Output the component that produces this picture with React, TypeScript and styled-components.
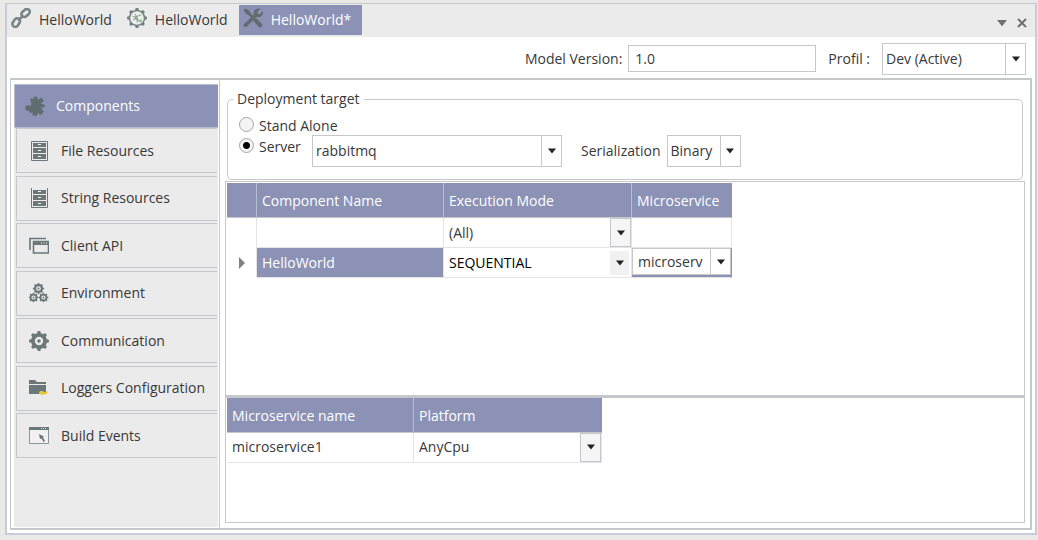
import React, { useState } from "react";
import styled, { createGlobalStyle, css } from "styled-components";

const accent = "#8b92b6";
const line = "#c6c7ca";
const panel = "#ebebeb";
const ink = "#383838";
const iconInk = "#6b7779";

const GlobalStyle = createGlobalStyle`
  * { box-sizing: border-box; }
  body {
    margin: 0;
    background: #e9e9e7;
    color: ${ink};
    font: 14px/20px "Open Sans", "Noto Sans", sans-serif;
  }
  button, input, select { font: inherit; color: inherit; }
  svg { flex: none; }
`;

const Page = styled.div`
  display: flex;
  min-height: 100vh;
  padding: 3px 1px 5px 5px;
`;

const Window = styled.div`
  flex: 1;
  display: flex;
  flex-direction: column;
  min-width: 0;
  border: 2px solid #c9cbda;
  border-top: 1px solid ${line};
  background: #fff;
`;

const TabStrip = styled.header`
  display: flex;
  align-items: flex-start;
  height: 33px;
  padding-top: 1px;
  background: ${panel};
`;

const Tab = styled.button<{ $active?: boolean }>`
  display: flex;
  align-items: center;
  gap: 8px;
  height: 30px;
  padding: 0 11px 0 4px;
  border: 0;
  background: ${(p) => (p.$active ? accent : "transparent")};
  color: ${(p) => (p.$active ? "#fff" : ink)};
  svg { margin-bottom: 4px; }
`;

const WindowActions = styled.div`
  display: flex;
  gap: 9px;
  margin: 12px 7px 0 auto;
`;

const IconButton = styled.button`
  display: flex;
  align-items: center;
  padding: 0;
  border: 0;
  background: none;
`;

const Toolbar = styled.div`
  display: flex;
  justify-content: flex-end;
  align-items: center;
  height: 41px;
  padding: 2px 9px 0 0;
`;

const ToolLabel = styled.label`
  margin-right: 6px;
`;

const VersionInput = styled.input`
  width: 188px;
  height: 27px;
  margin-right: 12px;
  padding: 0 6px;
  border: 1px solid ${line};
  background: #fff;
`;

const ProfileLabel = styled.label`
  margin-right: 12px;
`;

const ComboFrame = styled.div<{ $width: string }>`
  display: grid;
  grid-template-columns: 1fr 20px;
  flex: none;
  width: ${(p) => p.$width};
  height: 32px;
  border: 1px solid ${line};
  background: #fff;
`;

const ComboSelect = styled.select`
  grid-area: 1 / 1 / 2 / 3;
  min-width: 0;
  padding: 0 20px 0 3px;
  border: 0;
  appearance: none;
  background: transparent;
`;

const ComboArrow = styled.span<{ $shade?: "button" | "flat" }>`
  grid-area: 1 / 2;
  display: flex;
  align-items: center;
  justify-content: center;
  border-left: 1px solid ${line};
  pointer-events: none;
  ${(p) => p.$shade === "button" && css`
    border: 1px solid ${line};
    background: #f5f5f5;
  `}
  ${(p) => p.$shade === "flat" && css`
    margin: 3px 2px 2px 0;
    border: 0;
    background: #f1f1f1;
  `}
`;

const CellCombo = styled.div`
  display: grid;
  grid-template-columns: 1fr 21px;
  height: 29px;
`;

const CellSelect = styled(ComboSelect)`
  padding-left: 5px;
`;

const EditorCombo = styled(ComboFrame)`
  height: 27px;
  margin-bottom: 2px;
  select { padding-left: 5px; }
`;

const Body = styled.div`
  flex: 1;
  display: flex;
  margin: 0 3px 3px;
  border: 2px solid ${line};
  border-left-width: 1px;
`;

const Sidebar = styled.nav`
  flex: none;
  width: 209px;
  padding: 4px 0 1px 3px;
  border-right: 1px solid ${line};
`;

const SidebarFill = styled.div`
  height: 100%;
  margin-right: 1px;
  background: ${panel};
`;

const CurrentItem = styled.button`
  display: flex;
  align-items: center;
  gap: 11px;
  width: 100%;
  height: 44px;
  padding: 0 10px;
  border: 1px solid #b9bdd0;
  border-right: 0;
  background: ${accent};
  color: #fff;
  text-align: left;
`;

const ItemList = styled.div`
  display: flex;
  flex-direction: column;
  justify-content: space-between;
  height: 330px;
  padding: 0 1px 0 2px;
`;

const Item = styled.button`
  display: flex;
  align-items: center;
  gap: 12px;
  height: 45px;
  padding: 0 0 0 12px;
  border: solid ${line};
  border-width: 1px 0 1px 1px;
  background: transparent;
  text-align: left;
  white-space: nowrap;
`;

const Main = styled.main`
  flex: 1;
  display: flex;
  flex-direction: column;
  min-width: 0;
  padding: 9px 5px 5px;
`;

const Target = styled.fieldset`
  height: 91px;
  margin: 0 2px 1px;
  padding: 6px 11px 0;
  border: 1px solid ${line};
  border-radius: 5px;
`;

const Legend = styled.legend`
  margin-left: -6px;
  padding: 0 4px;
`;

const RadioLabel = styled.label`
  display: flex;
  align-items: center;
  gap: 5px;
  height: 22px;
`;

const Radio = styled.input`
  appearance: none;
  width: 15px;
  height: 15px;
  margin: 0 0 4px;
  border: 1px solid #a5a5a5;
  border-radius: 50%;
  background: #f4f4f4;
  &:checked {
    background: radial-gradient(circle, #000 0 3px, #f4f4f4 4px);
  }
`;

const TargetRow = styled.div`
  display: flex;
  align-items: flex-start;
  margin-top: -2px;
`;

const ServerChoice = styled.div`
  flex: none;
  width: 73px;
  padding-top: 1px;
`;

const SerializationLabel = styled.label`
  margin: 6px 6px 0 19px;
`;

const GridPanel = styled.section<{ $grow: number }>`
  flex: ${(p) => p.$grow} 0 0;
  min-height: 100px;
  padding: 1px;
  border: 1px solid ${line};
  & + & { border-top-width: 2px; padding-top: 0; }
`;

const Grid = styled.table`
  border-collapse: separate;
  border-spacing: 0;
  table-layout: fixed;
  th, td { padding: 0; text-align: left; font-weight: 400; }
  th {
    height: 35px;
    padding: 2px 5px 0;
    border-right: 1px solid #b9bdd0;
    border-bottom: 1px solid ${line};
    background: ${accent};
    color: #fff;
  }
  td {
    height: 30px;
    border-right: 1px solid #e4e4e6;
    border-bottom: 1px solid #e4e4e6;
  }
  th:last-child { border-right-color: ${accent}; }
`;

const TextCell = styled.td<{ $selected?: boolean }>`
  && {
    padding: 0 5px;
    ${(p) => p.$selected && css`
      background: ${accent};
      color: #fff;
    `}
  }
`;

const MarkerCell = styled.td`
  && { border-bottom: 0; padding-left: 11px; }
  svg { display: block; }
`;

const BoldEdgeCell = styled.td`
  && { background: ${accent}; border-right-color: ${accent}; }
`;

const BlackCell = styled.td`
  color: #000;
`;

const Triangle = ({ size = 8, color = "#222" }: { size?: number; color?: string }) => (
  <svg width={size} height={size} viewBox="0 0 8 8" aria-hidden="true">
    <path d="M0 1.500h8L4 6.500z" fill={color} />
  </svg>
);

type ComboProps = { label?: string; id?: string; width: string; options: string[]; frame?: typeof ComboFrame };

const Combo = ({ label, id, width, options, frame: Frame = ComboFrame }: ComboProps) => (
  <Frame $width={width}>
    <ComboSelect id={id} aria-label={label}>
      {options.map((o) => <option key={o}>{o}</option>)}
    </ComboSelect>
    <ComboArrow><Triangle /></ComboArrow>
  </Frame>
);

const InCellCombo = ({ label, value, shade }: { label: string; value: string; shade: "button" | "flat" }) => (
  <CellCombo>
    <CellSelect aria-label={label}><option>{value}</option></CellSelect>
    <ComboArrow $shade={shade}><Triangle /></ComboArrow>
  </CellCombo>
);

const gearPath = (cx: number, cy: number, outer: number, inner: number, teeth: number) => {
  const pts: string[] = [];
  const step = (Math.PI * 2) / teeth;
  for (let i = 0; i < teeth; i++) {
    const a = i * step - Math.PI / 2;
    [[-0.28, inner], [-0.17, outer], [0.17, outer], [0.28, inner], [0.5, inner]].forEach(([k, r]) => {
      pts.push(`${(cx + Math.cos(a + k * step) * r).toFixed(2)} ${(cy + Math.sin(a + k * step) * r).toFixed(2)}`);
    });
  }
  return `M${pts.join("L")}Z`;
};

const Svg = ({ children }: { children: React.ReactNode }) => (
  <svg width="20" height="20" viewBox="0 0 20 20" fill="none" aria-hidden="true">{children}</svg>
);

const LinkIcon = () => (
  <Svg>
    <g stroke="#7b8485" strokeWidth="2.6">
      <rect x="-4.6" y="-2.9" width="9.2" height="5.8" rx="2.9" transform="translate(14.6 5) rotate(-42)" />
      <rect x="-4.6" y="-2.9" width="9.2" height="5.8" rx="2.9" transform="translate(5.2 14.6) rotate(-58)" />
      <path d="M7 12.5l5.4-5" />
    </g>
  </Svg>
);

const GearOutlineIcon = () => (
  <Svg>
    <path d={gearPath(10, 10, 10, 8.2, 8)} fill="#758080" />
    <circle cx="10" cy="10" r="6.8" fill="#ededed" />
    <path d="M5.500 8l3 1.500M6 12l3-1.500M8 6l2 3" stroke="#8d9695" />
    <path d="M8.500 9l6-2.500M9 10l5 4M9.500 9.500l1 5" stroke="#8cb98f" strokeWidth="1.300" />
    <circle cx="9" cy="9.700" r="1.500" fill="#83a286" />
    <path d="M11.500 13.500l3-2.500.5 3z" fill="#8cb98f" />
  </Svg>
);

const ToolsIcon = () => (
  <Svg>
    <path d="M2.500 17.200L12 8" stroke="#626b6e" strokeWidth="3.600" strokeLinecap="round" />
    <path d="M17.400.8l-3 3 .4 2 2 .5 3-3c.8 3-1.600 6.400-5.200 6-3.300-.4-4.900-4-3.300-6.600C12.600.9 15 .1 17.400.8z" fill="#626b6e" />
    <path d="M.6 2.200L2.500.4l4 2.400.6 2 4.300 4.300-1.900 1.900-4.300-4.300-2-.6z" fill="#626b6e" />
    <path d="M12.500 12.500l4.700 4.700" stroke="#626b6e" strokeWidth="4.200" strokeLinecap="round" />
  </Svg>
);

const PuzzleIcon = () => (
  <Svg>
    <path d="M5 2.200L8.200 3c.6-3.400 5-3 4.600.2L12.600 4l4.200-2.400 2 3.600-3.200 2.200 3.200 1.200c1.500.6 1.300 2.600-.2 2.800l-2.800-.2 3 4.600-3.400 3.400-2.400-2.400-1.600 3.400-4-1 .2-3.200-2.400 1.200-1.600-2.800C.4 15.800-1.200 11 2 9.600c1.200-.5 2.600-.2 3.400.6l1-2.600z" fill="#5f6c70" />
  </Svg>
);

const CabinetIcon = ({ open }: { open?: boolean }) => (
  <Svg>
    <path d={open ? "M2.500 0v19.500h16V0" : "M2.500.5h16v19h-16z"} stroke={iconInk} />
    <path d="M4 2h13v4H4zM4 7h13v5H4zM4 13h13v5H4z" fill={iconInk} />
    <path d="M9 3.500h3M9 9.500h3M9 15.500h3" stroke="#f4f4f4" />
  </Svg>
);

const WindowsIcon = () => (
  <Svg>
    <path d="M1 14V2.500H17" stroke={iconInk} strokeWidth="1.600" />
    <path d="M4.500 5.500h15V17h-15z" stroke={iconInk} strokeWidth="1.600" />
    <path d="M4 5h16v4H4z" fill={iconInk} />
    <path d="M12 7h1M14.500 7h1M17 7h1" stroke="#fff" />
  </Svg>
);

const Gear = ({ cx, cy, r }: { cx: number; cy: number; r: number }) => (
  <>
    <path d={gearPath(cx, cy, r, r * 0.8, 8)} fill={iconInk} />
    <circle cx={cx} cy={cy} r={r * 0.42} fill={panel} />
    <circle cx={cx} cy={cy} r={r * 0.18} fill={iconInk} />
  </>
);

const GearsIcon = () => (
  <Svg>
    <Gear cx={9.5} cy={5.5} r={5.6} />
    <Gear cx={4.5} cy={14.5} r={4.9} />
    <Gear cx={14.5} cy={14.5} r={4.9} />
  </Svg>
);

const GearIcon = () => <Svg><Gear cx={10} cy={10} r={10} /></Svg>;

const FolderKeyIcon = () => (
  <Svg>
    <path d="M0 2h6l2 2h9v2H0zM0 7h17v9H0z" fill={iconInk} />
    <path d="M10 14.500c0-2 4-2 4.800-.5l4.200-.5-1.500 2.500-3 .5c-1.500.5-4.500.2-4.500-2z" fill="#e2c933" />
  </Svg>
);

const BuildIcon = () => (
  <Svg>
    <path d="M.5 1.500h19v16H.5z" fill="#f1f1f1" stroke="#8c9698" />
    <path d="M0 1h20v3H0z" fill={iconInk} />
    <path d="M12 2.500h1M14 2.500h1M16 2.500h1" stroke="#dfe2e2" />
    <path d="M10 8l5 2.500-1 1 2 3.500-1.500 1-2-3.500-1.500.5z" fill={iconInk} />
  </Svg>
);

const items = [
  { name: "File Resources", icon: <CabinetIcon /> },
  { name: "String Resources", icon: <CabinetIcon open /> },
  { name: "Client API", icon: <WindowsIcon /> },
  { name: "Environment", icon: <GearsIcon /> },
  { name: "Communication", icon: <GearIcon /> },
  { name: "Loggers Configuration", icon: <FolderKeyIcon /> },
  { name: "Build Events", icon: <BuildIcon /> },
];

export default function App() {
  const [target, setTarget] = useState("server");
  return (
    <>
      <GlobalStyle />
      <Page>
        <Window>
          <TabStrip>
            <Tab><LinkIcon />HelloWorld</Tab>
            <Tab><GearOutlineIcon />HelloWorld</Tab>
            <Tab $active><ToolsIcon />HelloWorld*</Tab>
            <WindowActions>
              <IconButton aria-label="Tab list"><Triangle size={10} color="#707070" /></IconButton>
              <IconButton aria-label="Close">
                <svg width="12" height="12" viewBox="0 0 12 12" aria-hidden="true">
                  <path d="M2 2l8 8M10 2l-8 8" stroke="#707070" strokeWidth="2" />
                </svg>
              </IconButton>
            </WindowActions>
          </TabStrip>
          <Toolbar>
            <ToolLabel htmlFor="version">Model Version:</ToolLabel>
            <VersionInput id="version" defaultValue="1.0" />
            <ProfileLabel htmlFor="profile">Profil :</ProfileLabel>
            <Combo id="profile" width="144px" options={["Dev (Active)"]} />
          </Toolbar>
          <Body>
            <Sidebar>
              <SidebarFill>
                <CurrentItem aria-current="page"><PuzzleIcon />Components</CurrentItem>
                <ItemList>
                  {items.map((item) => <Item key={item.name}>{item.icon}{item.name}</Item>)}
                </ItemList>
              </SidebarFill>
            </Sidebar>
            <Main>
              <Target>
                <Legend>Deployment target</Legend>
                <RadioLabel>
                  <Radio type="radio" name="target" checked={target === "alone"} onChange={() => setTarget("alone")} />
                  Stand Alone
                </RadioLabel>
                <TargetRow>
                  <ServerChoice>
                    <RadioLabel>
                      <Radio type="radio" name="target" checked={target === "server"} onChange={() => setTarget("server")} />
                      Server
                    </RadioLabel>
                  </ServerChoice>
                  <Combo label="Server" width="250px" options={["rabbitmq"]} />
                  <SerializationLabel htmlFor="serialization">Serialization</SerializationLabel>
                  <Combo id="serialization" width="74px" options={["Binary"]} />
                </TargetRow>
              </Target>
              <GridPanel $grow={216}>
                <Grid>
                  <colgroup>
                    <col width="30" /><col width="187" /><col width="188" /><col width="100" />
                  </colgroup>
                  <thead>
                    <tr><th /><th>Component Name</th><th>Execution Mode</th><th>Microservice</th></tr>
                  </thead>
                  <tbody>
                    <tr>
                      <MarkerCell />
                      <td />
                      <td><InCellCombo label="Filter execution mode" value="(All)" shade="button" /></td>
                      <td />
                    </tr>
                    <tr>
                      <MarkerCell>
                        <svg width="7" height="12" viewBox="0 0 7 12" aria-hidden="true">
                          <path d="M1 0l6 6-6 6z" fill="#808080" />
                        </svg>
                      </MarkerCell>
                      <TextCell $selected>HelloWorld</TextCell>
                      <BlackCell><InCellCombo label="Execution mode" value="SEQUENTIAL" shade="flat" /></BlackCell>
                      <BoldEdgeCell>
                        <Combo frame={EditorCombo as typeof ComboFrame} label="Microservice" width="100%" options={["microserv"]} />
                      </BoldEdgeCell>
                    </tr>
                  </tbody>
                </Grid>
              </GridPanel>
              <GridPanel $grow={126}>
                <Grid>
                  <colgroup><col width="187" /><col width="188" /></colgroup>
                  <thead><tr><th>Microservice name</th><th>Platform</th></tr></thead>
                  <tbody>
                    <tr>
                      <TextCell>microservice1</TextCell>
                      <td><InCellCombo label="Platform" value="AnyCpu" shade="button" /></td>
                    </tr>
                  </tbody>
                </Grid>
              </GridPanel>
            </Main>
          </Body>
        </Window>
      </Page>
    </>
  );
}
